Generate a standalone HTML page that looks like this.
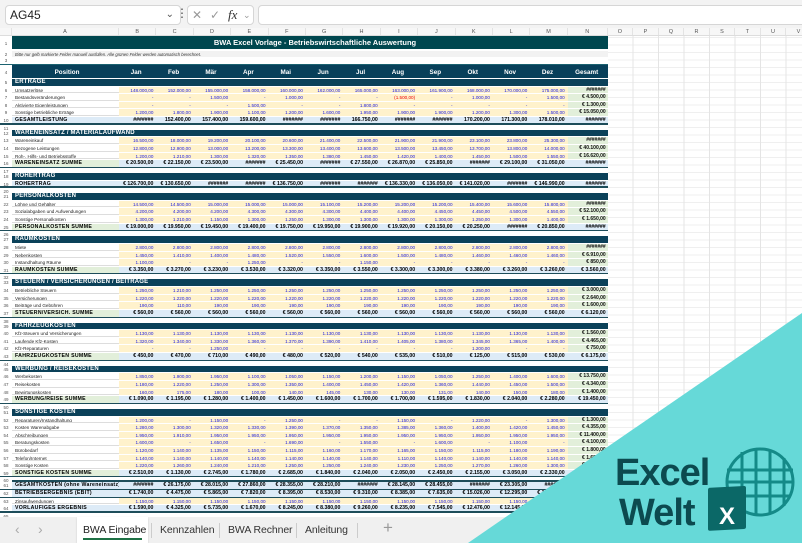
<!DOCTYPE html>
<html><head><meta charset="utf-8">
<style>
*{margin:0;padding:0;box-sizing:border-box}
body{width:802px;height:543px;overflow:hidden;background:#fff;font-family:"Liberation Sans",sans-serif;position:relative}
i,b,s,u,em{font-style:normal;text-decoration:none;font-weight:normal;display:block;flex:none;overflow:hidden;white-space:nowrap}
#top{position:absolute;left:0;top:0;width:802px;height:28px;background:#f3f3f3}
#nb{position:absolute;left:5px;top:5px;width:176px;height:20px;background:#fff;border:1px solid #d6d6d6;border-radius:4px;font-size:12px;line-height:18px;padding-left:4px;color:#222}
#fx{position:absolute;left:187px;top:5px;width:67px;height:20px;background:#fff;border:1px solid #d6d6d6;border-radius:4px;font-size:12px;line-height:18px;color:#999}
#fi{position:absolute;left:258px;top:5px;width:550px;height:20px;background:#fff;border:1px solid #d6d6d6;border-radius:4px}
#colh{position:absolute;left:0;top:28px;width:802px;height:8px;background:#f7f7f7;border-bottom:1px solid #ddd;display:flex;font-size:5.5px;line-height:8px;color:#555}
#colh span{flex:none;text-align:center;border-right:1px solid #e3e3e3}
#grid{position:absolute;left:608px;top:36px;width:194px;height:481px;background:repeating-linear-gradient(90deg,transparent 0 24.5px,#e4e4e4 24.5px 25.5px),repeating-linear-gradient(0deg,transparent 0 6.5px,#efefef 6.5px 7.5px)}
#sheet{position:absolute;left:0;top:36px;width:608px}
.r{display:flex;height:7.62px;font-size:4.6px;line-height:7.5px;border-bottom:1px solid #fff}
.r i{width:12px;text-align:center;color:#555;background:#fff;font-size:4.5px}
.r b{width:107px;padding-left:3px;color:#222}
.r s{width:37.4px;text-align:right;padding-right:3px;color:#1a1adf}
.r u{width:40px;text-align:right;padding-right:2px;font-weight:bold;color:#111;font-size:5px}
.d b{background:#fff;border-bottom:1px solid #ddd}
.d s{background:#fff2cc}
.d u{background:#e2efda}
.t{border-bottom:1px solid #1d4d5a}
.t b{background:#e2efda;font-weight:bold;font-size:5.2px;color:#000;letter-spacing:.3px}
.t s,.t u{background:#ddebf7;color:#000;font-weight:bold;font-size:5.2px}
.h b{width:596px;background:#0b4159;color:#fff;font-weight:bold;font-size:6px;line-height:7.6px;letter-spacing:.2px}
.sp{height:5.1px;border:0}
.sp i{height:5px}
#tabs{position:absolute;left:0;top:517px;width:802px;height:26px;background:#f0f0f0;font-size:10.5px;color:#333;letter-spacing:-0.1px}
#tabs span{position:absolute;top:7px}
#tri{position:absolute;left:0;top:0}
</style></head><body>
<div id="top">
<div id="nb">AG45<span style="position:absolute;right:6px;top:0;color:#555;font-size:10px">&#8964;</span></div>
<span style="position:absolute;left:176px;top:6px;font-size:12px;color:#444">&#8942;</span>
<div id="fx"><span style="position:absolute;left:4px">&#10005;</span><span style="position:absolute;left:22px">&#10003;</span><span style="position:absolute;left:40px;color:#333;font-style:italic;font-family:'Liberation Serif',serif;font-size:13px">fx</span><span style="position:absolute;left:55px;font-size:9px">&#8964;</span></div>
<div id="fi"></div>
</div>
<div id="colh"><span style="width:12px"></span><span style="width:107px">A</span><span style="width:37.4px">B</span><span style="width:37.4px">C</span><span style="width:37.4px">D</span><span style="width:37.4px">E</span><span style="width:37.4px">F</span><span style="width:37.4px">G</span><span style="width:37.4px">H</span><span style="width:37.4px">I</span><span style="width:37.4px">J</span><span style="width:37.4px">K</span><span style="width:37.4px">L</span><span style="width:37.4px">M</span><span style="width:40px">N</span><span style="width:25.5px">O</span><span style="width:25.5px">P</span><span style="width:25.5px">Q</span><span style="width:25.5px">R</span><span style="width:25.5px">S</span><span style="width:25.5px">T</span><span style="width:25.5px">U</span><span style="width:25.5px">V</span></div>
<div id="grid"></div>
<div id="sheet">
<div class="r" style="height:15px;line-height:15px;border-bottom:2px solid #fff"><i style="line-height:15px">1</i><b style="width:596px;background:#00474f;color:#fff;font-weight:bold;font-size:7.5px;text-align:center;padding-left:10px;line-height:13px">BWA Excel Vorlage - Betriebswirtschaftliche Auswertung</b></div>
<div class="r" style="height:7px;line-height:7px"><i>2</i><b style="width:596px;background:#f2f2f2;font-style:italic;font-size:4.2px;color:#333">Bitte nur gelb markierte Felder manuell ausfüllen. Alle grünen Felder werden automatisch berechnet.</b></div>
<div class="r" style="height:6px;line-height:6px"><i>3</i></div>
<div class="r" style="height:15px;line-height:15px;font-size:6.3px;border-top:1px solid #1b6270"><i style="font-size:4.5px">4</i><b style="background:#08405a;color:#fff;font-weight:bold;text-align:center">Position</b><s style="background:#08405a;color:#fff;font-weight:bold;text-align:center">Jan</s><s style="background:#08405a;color:#fff;font-weight:bold;text-align:center">Feb</s><s style="background:#08405a;color:#fff;font-weight:bold;text-align:center">Mär</s><s style="background:#08405a;color:#fff;font-weight:bold;text-align:center">Apr</s><s style="background:#08405a;color:#fff;font-weight:bold;text-align:center">Mai</s><s style="background:#08405a;color:#fff;font-weight:bold;text-align:center">Jun</s><s style="background:#08405a;color:#fff;font-weight:bold;text-align:center">Jul</s><s style="background:#08405a;color:#fff;font-weight:bold;text-align:center">Aug</s><s style="background:#08405a;color:#fff;font-weight:bold;text-align:center">Sep</s><s style="background:#08405a;color:#fff;font-weight:bold;text-align:center">Okt</s><s style="background:#08405a;color:#fff;font-weight:bold;text-align:center">Nov</s><s style="background:#08405a;color:#fff;font-weight:bold;text-align:center">Dez</s><u style="background:#08405a;color:#fff;text-align:center;font-size:6.3px">Gesamt</u></div>

<div class="r h"><i>5</i><b>ERTRÄGE</b></div>
<div class="r d"><i>6</i><b>Umsatzerlöse</b><s>148.000,00</s><s>152.000,00</s><s>155.000,00</s><s>158.000,00</s><s>160.000,00</s><s>162.000,00</s><s>165.000,00</s><s>163.000,00</s><s>161.900,00</s><s>168.000,00</s><s>170.000,00</s><s>175.000,00</s><u>#######</u></div>
<div class="r d"><i>7</i><b>Bestandsveränderungen</b><s>-</s><s>-</s><s>1.500,00</s><s>-</s><s>1.000,00</s><s>-</s><s>-</s><s style="color:#e00">(1.500,00)</s><s>-</s><s>1.000,00</s><s>-</s><s>1.500,00</s><u>€ 4.500,00</u></div>
<div class="r d"><i>8</i><b>Aktivierte Eigenleistungen</b><s>-</s><s>-</s><s>-</s><s>1.500,00</s><s>-</s><s>-</s><s>1.800,00</s><s>-</s><s>-</s><s>-</s><s>-</s><s>-</s><u>€ 1.300,00</u></div>
<div class="r d"><i>9</i><b>Sonstige betriebliche Erträge</b><s>1.200,00</s><s>1.800,00</s><s>1.900,00</s><s>1.100,00</s><s>1.200,00</s><s>1.600,00</s><s>1.950,00</s><s>1.900,00</s><s>1.900,00</s><s>1.200,00</s><s>1.300,00</s><s>1.500,00</s><u>€ 15.050,00</u></div>
<div class="r t" style="border-bottom:2px solid #1d4d5a"><i>10</i><b style="background:#ddebf7">GESAMTLEISTUNG</b><s>#######</s><s>152.400,00</s><s>157.400,00</s><s>159.600,00</s><s>#######</s><s>#######</s><s>166.750,00</s><s>#######</s><s>#######</s><s>170.200,00</s><s>171.300,00</s><s>178.010,00</s><u>#######</u></div>
<div class="r sp"><i>11</i></div>

<div class="r h"><i>12</i><b>WARENEINSATZ / MATERIALAUFWAND</b></div>
<div class="r d"><i>13</i><b>Wareneinkauf</b><s>16.500,00</s><s>18.000,00</s><s>19.200,00</s><s>20.100,00</s><s>20.600,00</s><s>21.400,00</s><s>22.500,00</s><s>21.900,00</s><s>21.900,00</s><s>23.100,00</s><s>23.800,00</s><s>25.300,00</s><u>#######</u></div>
<div class="r d"><i>14</i><b>Bezogene Leistungen</b><s>12.800,00</s><s>12.900,00</s><s>13.000,00</s><s>13.200,00</s><s>13.300,00</s><s>13.400,00</s><s>13.600,00</s><s>13.500,00</s><s>13.450,00</s><s>13.700,00</s><s>13.800,00</s><s>14.000,00</s><u>€ 40.100,00</u></div>
<div class="r d"><i>15</i><b>Roh-, Hilfs- und Betriebsstoffe</b><s>1.200,00</s><s>1.210,00</s><s>1.300,00</s><s>1.320,00</s><s>1.350,00</s><s>1.380,00</s><s>1.450,00</s><s>1.420,00</s><s>1.400,00</s><s>1.450,00</s><s>1.500,00</s><s>1.550,00</s><u>€ 16.620,00</u></div>
<div class="r t"><i>16</i><b>WARENEINSATZ SUMME</b><s>€ 20.500,00</s><s>€ 22.150,00</s><s>€ 23.500,00</s><s>#######</s><s>€ 25.450,00</s><s>#######</s><s>€ 27.550,00</s><s>€ 26.870,00</s><s>€ 25.850,00</s><s>#######</s><s>€ 29.100,00</s><s>€ 31.050,00</s><u>#######</u></div>
<div class="r sp"><i>17</i></div>

<div class="r h"><i>18</i><b>ROHERTRAG</b></div>
<div class="r t" style="border-bottom:2px solid #1d4d5a"><i>19</i><b style="background:#ddebf7">ROHERTRAG</b><s>€ 126.700,00</s><s>€ 130.650,00</s><s>#######</s><s>#######</s><s>€ 136.750,00</s><s>#######</s><s>#######</s><s>€ 136.330,00</s><s>€ 136.050,00</s><s>€ 141.020,00</s><s>#######</s><s>€ 146.990,00</s><u>#######</u></div>
<div class="r sp"><i>20</i></div>

<div class="r h"><i>21</i><b>PERSONALKOSTEN</b></div>
<div class="r d"><i>22</i><b>Löhne und Gehälter</b><s>14.500,00</s><s>14.500,00</s><s>15.000,00</s><s>15.000,00</s><s>15.000,00</s><s>15.100,00</s><s>15.200,00</s><s>15.200,00</s><s>15.200,00</s><s>15.400,00</s><s>15.600,00</s><s>15.800,00</s><u>#######</u></div>
<div class="r d"><i>23</i><b>Sozialabgaben und Aufwendungen</b><s>4.200,00</s><s>4.200,00</s><s>4.200,00</s><s>4.300,00</s><s>4.300,00</s><s>4.300,00</s><s>4.400,00</s><s>4.400,00</s><s>4.450,00</s><s>4.450,00</s><s>4.500,00</s><s>4.550,00</s><u>€ 52.100,00</u></div>
<div class="r d"><i>24</i><b>Sonstige Personalkosten</b><s>1.300,00</s><s>1.210,00</s><s>1.150,00</s><s>1.300,00</s><s>1.250,00</s><s>1.300,00</s><s>1.300,00</s><s>1.300,00</s><s>1.300,00</s><s>1.250,00</s><s>1.300,00</s><s>1.400,00</s><u>€ 1.650,00</u></div>
<div class="r t"><i>25</i><b>PERSONALKOSTEN SUMME</b><s>€ 19.000,00</s><s>€ 19.950,00</s><s>€ 19.450,00</s><s>€ 19.400,00</s><s>€ 19.750,00</s><s>€ 19.950,00</s><s>€ 19.900,00</s><s>€ 19.920,00</s><s>€ 20.150,00</s><s>€ 20.250,00</s><s>#######</s><s>€ 20.850,00</s><u>#######</u></div>
<div class="r sp"><i>26</i></div>

<div class="r h"><i>27</i><b>RAUMKOSTEN</b></div>
<div class="r d"><i>28</i><b>Miete</b><s>2.800,00</s><s>2.800,00</s><s>2.800,00</s><s>2.800,00</s><s>2.800,00</s><s>2.800,00</s><s>2.800,00</s><s>2.800,00</s><s>2.800,00</s><s>2.800,00</s><s>2.800,00</s><s>2.800,00</s><u>#######</u></div>
<div class="r d"><i>29</i><b>Nebenkosten</b><s>1.450,00</s><s>1.410,00</s><s>1.400,00</s><s>1.480,00</s><s>1.520,00</s><s>1.550,00</s><s>1.600,00</s><s>1.500,00</s><s>1.480,00</s><s>1.460,00</s><s>1.460,00</s><s>1.460,00</s><u>€ 6.910,00</u></div>
<div class="r d"><i>30</i><b>Instandhaltung Räume</b><s>1.100,00</s><s>-</s><s>-</s><s>1.250,00</s><s>-</s><s>-</s><s>1.150,00</s><s>-</s><s>-</s><s>-</s><s>-</s><s>-</s><u>€ 850,00</u></div>
<div class="r t"><i>31</i><b>RAUMKOSTEN SUMME</b><s>€ 3.350,00</s><s>€ 3.270,00</s><s>€ 3.230,00</s><s>€ 3.530,00</s><s>€ 3.320,00</s><s>€ 3.350,00</s><s>€ 3.550,00</s><s>€ 3.300,00</s><s>€ 3.300,00</s><s>€ 3.380,00</s><s>€ 3.260,00</s><s>€ 3.260,00</s><u>€ 3.560,00</u></div>
<div class="r sp"><i>32</i></div>

<div class="r h"><i>33</i><b>STEUERN / VERSICHERUNGEN / BEITRÄGE</b></div>
<div class="r d"><i>34</i><b>Betriebliche Steuern</b><s>1.250,00</s><s>1.210,00</s><s>1.250,00</s><s>1.250,00</s><s>1.250,00</s><s>1.250,00</s><s>1.250,00</s><s>1.250,00</s><s>1.250,00</s><s>1.250,00</s><s>1.250,00</s><s>1.250,00</s><u>€ 3.000,00</u></div>
<div class="r d"><i>35</i><b>Versicherungen</b><s>1.220,00</s><s>1.220,00</s><s>1.220,00</s><s>1.220,00</s><s>1.220,00</s><s>1.220,00</s><s>1.220,00</s><s>1.220,00</s><s>1.220,00</s><s>1.220,00</s><s>1.220,00</s><s>1.220,00</s><u>€ 2.640,00</u></div>
<div class="r d"><i>36</i><b>Beiträge und Gebühren</b><s>190,00</s><s>110,00</s><s>190,00</s><s>190,00</s><s>190,00</s><s>190,00</s><s>190,00</s><s>190,00</s><s>190,00</s><s>190,00</s><s>190,00</s><s>190,00</s><u>€ 1.600,00</u></div>
<div class="r t"><i>37</i><b>STEUERN/VERSICH. SUMME</b><s>€ 560,00</s><s>€ 560,00</s><s>€ 560,00</s><s>€ 560,00</s><s>€ 560,00</s><s>€ 560,00</s><s>€ 560,00</s><s>€ 560,00</s><s>€ 560,00</s><s>€ 560,00</s><s>€ 560,00</s><s>€ 560,00</s><u>€ 6.120,00</u></div>
<div class="r sp"><i>38</i></div>

<div class="r h"><i>39</i><b>FAHRZEUGKOSTEN</b></div>
<div class="r d"><i>40</i><b>Kfz-Steuern und Versicherungen</b><s>1.130,00</s><s>1.130,00</s><s>1.130,00</s><s>1.130,00</s><s>1.130,00</s><s>1.130,00</s><s>1.130,00</s><s>1.130,00</s><s>1.130,00</s><s>1.130,00</s><s>1.130,00</s><s>1.130,00</s><u>€ 1.560,00</u></div>
<div class="r d"><i>41</i><b>Laufende Kfz-Kosten</b><s>1.320,00</s><s>1.340,00</s><s>1.330,00</s><s>1.360,00</s><s>1.370,00</s><s>1.390,00</s><s>1.410,00</s><s>1.405,00</s><s>1.380,00</s><s>1.345,00</s><s>1.365,00</s><s>1.400,00</s><u>€ 4.465,00</u></div>
<div class="r d"><i>42</i><b>Kfz-Reparaturen</b><s>-</s><s>-</s><s>1.250,00</s><s>-</s><s>-</s><s>-</s><s>-</s><s>-</s><s>-</s><s>1.200,00</s><s>-</s><s>-</s><u>€ 750,00</u></div>
<div class="r t"><i>43</i><b>FAHRZEUGKOSTEN SUMME</b><s>€ 450,00</s><s>€ 470,00</s><s>€ 710,00</s><s>€ 490,00</s><s>€ 480,00</s><s>€ 520,00</s><s>€ 540,00</s><s>€ 535,00</s><s>€ 510,00</s><s>€ 125,00</s><s>€ 515,00</s><s>€ 530,00</s><u>€ 6.175,00</u></div>
<div class="r sp"><i>44</i></div>

<div class="r h"><i>45</i><b>WERBUNG / REISEKOSTEN</b></div>
<div class="r d"><i>46</i><b>Werbekosten</b><s>1.850,00</s><s>1.900,00</s><s>1.950,00</s><s>1.100,00</s><s>1.050,00</s><s>1.150,00</s><s>1.200,00</s><s>1.150,00</s><s>1.050,00</s><s>1.250,00</s><s>1.400,00</s><s>1.600,00</s><u>€ 13.750,00</u></div>
<div class="r d"><i>47</i><b>Reisekosten</b><s>1.180,00</s><s>1.220,00</s><s>1.250,00</s><s>1.300,00</s><s>1.350,00</s><s>1.400,00</s><s>1.450,00</s><s>1.420,00</s><s>1.360,00</s><s>1.440,00</s><s>1.450,00</s><s>1.500,00</s><u>€ 4.340,00</u></div>
<div class="r d"><i>48</i><b>Bewirtungskosten</b><s>160,00</s><s>175,00</s><s>180,00</s><s>100,00</s><s>140,00</s><s>145,00</s><s>130,00</s><s>130,00</s><s>131,00</s><s>140,00</s><s>150,00</s><s>180,00</s><u>€ 1.400,00</u></div>
<div class="r t"><i>49</i><b>WERBUNG/REISE SUMME</b><s>€ 1.090,00</s><s>€ 1.195,00</s><s>€ 1.280,00</s><s>€ 1.400,00</s><s>€ 1.450,00</s><s>€ 1.600,00</s><s>€ 1.700,00</s><s>€ 1.700,00</s><s>€ 1.595,00</s><s>€ 1.830,00</s><s>€ 2.040,00</s><s>€ 2.280,00</s><u>€ 19.450,00</u></div>
<div class="r sp"><i>50</i></div>

<div class="r h"><i>51</i><b>SONSTIGE KOSTEN</b></div>
<div class="r d"><i>52</i><b>Reparaturen/Instandhaltung</b><s>1.200,00</s><s>-</s><s>1.150,00</s><s>-</s><s>1.250,00</s><s>-</s><s>-</s><s>1.150,00</s><s>-</s><s>1.220,00</s><s>-</s><s>1.300,00</s><u>€ 1.300,00</u></div>
<div class="r d"><i>53</i><b>Kosten Warenabgabe</b><s>1.280,00</s><s>1.300,00</s><s>1.320,00</s><s>1.330,00</s><s>1.390,00</s><s>1.370,00</s><s>1.350,00</s><s>1.385,00</s><s>1.360,00</s><s>1.400,00</s><s>1.420,00</s><s>1.450,00</s><u>€ 4.355,00</u></div>
<div class="r d"><i>54</i><b>Abschreibungen</b><s>1.950,00</s><s>1.910,00</s><s>1.950,00</s><s>1.950,00</s><s>1.950,00</s><s>1.950,00</s><s>1.950,00</s><s>1.950,00</s><s>1.950,00</s><s>1.950,00</s><s>1.950,00</s><s>1.950,00</s><u>€ 11.400,00</u></div>
<div class="r d"><i>55</i><b>Beratungskosten</b><s>1.600,00</s><s>-</s><s>1.650,00</s><s>-</s><s>1.690,00</s><s>-</s><s>1.550,00</s><s>-</s><s>1.600,00</s><s>-</s><s>1.100,00</s><s>-</s><u>€ 4.100,00</u></div>
<div class="r d"><i>56</i><b>Bürobedarf</b><s>1.120,00</s><s>1.140,00</s><s>1.135,00</s><s>1.150,00</s><s>1.115,00</s><s>1.160,00</s><s>1.170,00</s><s>1.165,00</s><s>1.150,00</s><s>1.115,00</s><s>1.180,00</s><s>1.190,00</s><u>€ 1.800,00</u></div>
<div class="r d"><i>57</i><b>Telefon/Internet</b><s>1.140,00</s><s>1.140,00</s><s>1.140,00</s><s>1.140,00</s><s>1.140,00</s><s>1.140,00</s><s>1.140,00</s><s>1.110,00</s><s>1.140,00</s><s>1.140,00</s><s>1.140,00</s><s>1.140,00</s><u>€ 1.680,00</u></div>
<div class="r d"><i>58</i><b>Sonstige Kosten</b><s>1.220,00</s><s>1.260,00</s><s>1.240,00</s><s>1.210,00</s><s>1.250,00</s><s>1.250,00</s><s>1.240,00</s><s>1.230,00</s><s>1.250,00</s><s>1.270,00</s><s>1.260,00</s><s>1.300,00</s><u>€ 2.900,00</u></div>
<div class="r t"><i>59</i><b>SONSTIGE KOSTEN SUMME</b><s>€ 2.510,00</s><s>€ 1.130,00</s><s>€ 2.745,00</s><s>€ 1.780,00</s><s>€ 2.685,00</s><s>€ 1.840,00</s><s>€ 2.040,00</s><s>€ 2.050,00</s><s>€ 2.450,00</s><s>€ 2.155,00</s><s>€ 3.050,00</s><s>€ 2.330,00</s><u>€ 27.500,00</u></div>
<div class="r sp" style="border-bottom:2px solid #1d4d5a"><i>60</i></div>
<div class="r t" style="border-bottom:1.5px solid #1d4d5a"><i>61</i><b style="background:#ddebf7">GESAMTKOSTEN (ohne Wareneinsatz)</b><s>#######</s><s>€ 26.175,00</s><s>€ 28.015,00</s><s>€ 27.860,00</s><s>€ 28.355,00</s><s>€ 28.210,00</s><s>#######</s><s>€ 28.145,00</s><s>€ 28.455,00</s><s>#######</s><s>€ 23.305,00</s><s>#######</s><u>#######</u></div>
<div class="r t"><i>62</i><b style="background:#ddebf7">BETRIEBSERGEBNIS (EBIT)</b><s>€ 1.740,00</s><s>€ 4.475,00</s><s>€ 5.865,00</s><s>€ 7.820,00</s><s>€ 8.395,00</s><s>€ 8.530,00</s><s>€ 9.310,00</s><s>€ 8.385,00</s><s>€ 7.635,00</s><s>€ 15.026,00</s><s>€ 12.295,00</s><s>€ 16.950,00</s><u>#######</u></div>
<div class="r d"><i>63</i><b>Zinsaufwendungen</b><s>1.150,00</s><s>1.150,00</s><s>1.150,00</s><s>1.150,00</s><s>1.150,00</s><s>1.150,00</s><s>1.150,00</s><s>1.150,00</s><s>1.150,00</s><s>1.150,00</s><s>1.150,00</s><s>1.150,00</s><u>€ 1.800,00</u></div>
<div class="r t" style="border-bottom:2px solid #1d4d5a"><i>64</i><b style="background:#ddebf7">VORLÄUFIGES ERGEBNIS</b><s>€ 1.590,00</s><s>€ 4.325,00</s><s>€ 5.735,00</s><s>€ 1.670,00</s><s>€ 8.245,00</s><s>€ 8.380,00</s><s>€ 9.260,00</s><s>€ 8.235,00</s><s>€ 7.545,00</s><s>€ 12.476,00</s><s>€ 12.145,00</s><s>€ 16.800,00</s><u>#######</u></div>
<div class="r"><i>65</i></div>
</div>

<div id="tabs">
<span style="left:15px;top:4px;color:#aaa;font-size:14px">&#8249;</span>
<span style="left:38px;top:4px;color:#aaa;font-size:14px">&#8250;</span>
<div style="position:absolute;left:77px;top:0;width:71px;height:26px;background:#fff;box-shadow:0 1px 2px rgba(0,0,0,.15)"></div>
<span style="left:83px;color:#222">BWA Eingabe</span>
<div style="position:absolute;left:83px;top:21px;width:59px;height:2px;background:#1e7145"></div>
<div style="position:absolute;left:151px;top:6px;width:1px;height:15px;background:#ccc"></div>
<span style="left:160px">Kennzahlen</span>
<div style="position:absolute;left:219px;top:6px;width:1px;height:15px;background:#ccc"></div>
<span style="left:228px">BWA Rechner</span>
<div style="position:absolute;left:296px;top:6px;width:1px;height:15px;background:#ccc"></div>
<span style="left:305px">Anleitung</span>
<div style="position:absolute;left:357px;top:6px;width:1px;height:15px;background:#ccc"></div>
<span style="left:383px;top:1px;color:#999;font-size:17px">+</span>
</div>

<svg id="tri" width="802" height="543" viewBox="0 0 802 543">
<polygon points="802,313 468,543 802,543" fill="#66d9d8"/>
<g fill="none" stroke="#148a88" stroke-width="3">
<circle cx="760" cy="482" r="33"/>
<path d="M727,470 H793 M727,482 H793 M729,496 H791 M742,452 V512 M756,449 V515 M770,450 V514 M784,458 V506"/>
</g>
<rect x="708" y="487" width="38" height="43" rx="2" fill="#0b6867" transform="skewY(-3) translate(0,38)"/>
<text x="727" y="524" fill="#fff" font-family="Liberation Sans, sans-serif" font-weight="bold" font-size="24" text-anchor="middle">X</text>
<text x="615" y="485" fill="#0c4a4f" font-family="Liberation Sans, sans-serif" font-weight="bold" font-size="38" letter-spacing="-1">Excel</text>
<text x="619" y="525" fill="#0c4a4f" font-family="Liberation Sans, sans-serif" font-weight="bold" font-size="38" letter-spacing="-1">Welt</text>
</svg>
</body></html>
